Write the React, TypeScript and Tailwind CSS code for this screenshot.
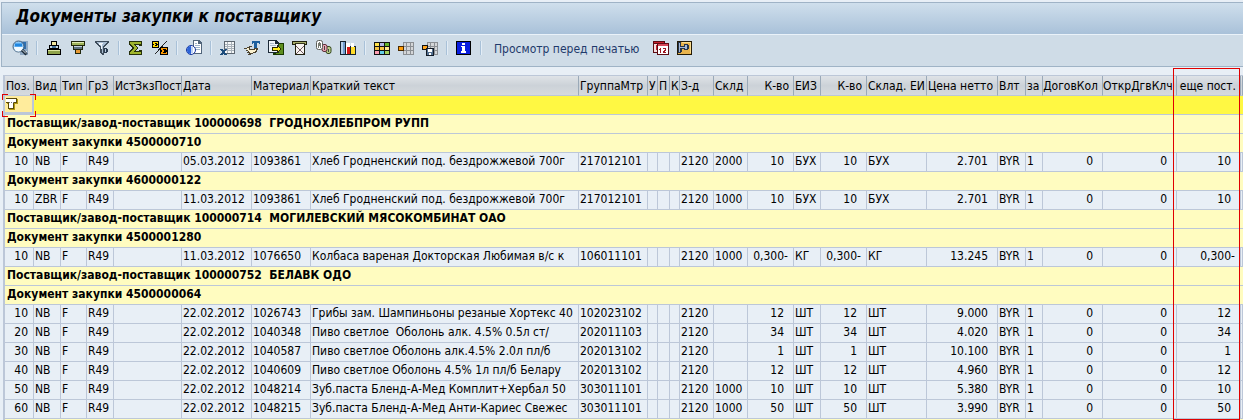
import type { ReactNode } from 'react'

type Column = { title: string; numeric?: boolean; marked?: boolean }

type Row =
  | { kind: 'group'; text: string }
  | { kind: 'item'; cells: string[] }

const columns: Column[] = [
  { title: 'Поз.' },
  { title: 'Вид' },
  { title: 'Тип' },
  { title: 'ГрЗ' },
  { title: 'ИстЗкзПост' },
  { title: 'Дата' },
  { title: 'Материал' },
  { title: 'Краткий текст' },
  { title: 'ГруппаМтр' },
  { title: 'У' },
  { title: 'П' },
  { title: 'К' },
  { title: 'З-д' },
  { title: 'Склд' },
  { title: 'К-во', numeric: true },
  { title: 'ЕИЗ' },
  { title: 'К-во', numeric: true },
  { title: 'Склад. ЕИ' },
  { title: 'Цена нетто', numeric: true },
  { title: 'Влт' },
  { title: 'за' },
  { title: 'ДоговКол', numeric: true },
  { title: 'ОткрДгвКлч', numeric: true },
  { title: 'еще пост.', numeric: true, marked: true },
  { title: 'е' },
]

const group = (text: string): Row => ({ kind: 'group', text })

function item(
  pos: string, type: string, date: string, material: string, text: string,
  matGroup: string, store: string, qty: string, unit: string, price: string,
): Row {
  return {
    kind: 'item',
    cells: [
      pos, type, 'F', 'R49', '', date, material, text, matGroup, '', '', '', '2120', store,
      qty, unit, qty, unit, price, 'BYR', '1', '0', '0', qty, '',
    ],
  }
}

const rows: Row[] = [
  group('Поставщик/завод-поставщик 100000698  ГРОДНОХЛЕБПРОМ РУПП'),
  group('Документ закупки 4500000710'),
  item('10', 'NB', '05.03.2012', '1093861', 'Хлеб Гродненский под. бездрожжевой 700г', '217012101', '2000', '10', 'БУХ', '2.701'),
  group('Документ закупки 4600000122'),
  item('10', 'ZBR', '11.03.2012', '1093861', 'Хлеб Гродненский под. бездрожжевой 700г', '217012101', '1000', '10', 'БУХ', '2.701'),
  group('Поставщик/завод-поставщик 100000714  МОГИЛЕВСКИЙ МЯСОКОМБИНАТ ОАО'),
  group('Документ закупки 4500001280'),
  item('10', 'NB', '11.03.2012', '1076650', 'Колбаса вареная Докторская Любимая в/с к', '106011101', '1000', '0,300-', 'КГ', '13.245'),
  group('Поставщик/завод-поставщик 100000752  БЕЛАВК ОДО'),
  group('Документ закупки 4500000064'),
  item('10', 'NB', '22.02.2012', '1026743', 'Грибы зам. Шампиньоны резаные Хортекс 40', '102023102', '', '12', 'ШТ', '9.000'),
  item('20', 'NB', '22.02.2012', '1040348', 'Пиво светлое  Оболонь алк. 4.5% 0.5л ст/', '202011103', '', '34', 'ШТ', '4.020'),
  item('30', 'NB', '22.02.2012', '1040587', 'Пиво светлое Оболонь алк.4.5% 2.0л пл/б', '202013102', '', '1', 'ШТ', '10.100'),
  item('40', 'NB', '22.02.2012', '1040609', 'Пиво светлое Оболонь 4.5% 1л пл/б Белару', '202013102', '', '12', 'ШТ', '4.960'),
  item('50', 'NB', '22.02.2012', '1048214', 'Зуб.паста Бленд-А-Мед Комплит+Хербал 50', '303011101', '1000', '10', 'ШТ', '5.380'),
  item('60', 'NB', '22.02.2012', '1048215', 'Зуб.паста Бленд-А-Мед Анти-Кариес Свежес', '303011101', '1000', '50', 'ШТ', '3.990'),
]

function Svg({ children }: { children: ReactNode }) {
  return (
    <svg className="w-4 h-4" viewBox="0 0 16 16" shapeRendering="crispEdges" aria-hidden="true">
      {children}
    </svg>
  )
}

const DetailsIcon = () => (
  <Svg>
    <path d="M6 1h10v14H8z" fill="#8fa9c4" />
    <path d="M10 2h4v7h-4z" fill="#2f6fb0" />
    <path d="M12 11h3v3h-3z" fill="#dfe8f0" />
    <g shapeRendering="auto">
      <circle cx="6.500" cy="6.500" r="5.500" fill="#8cc8f8" stroke="#4a6078" />
      <path d="M2 7a4.500 4.500 0 0 0 9 0z" fill="#f2faff" />
      <path d="M3 5h7" stroke="#1f86e0" strokeWidth="3" />
      <path d="M10 10l4.500 4.500" stroke="#1b2a38" strokeWidth="3" />
      <path d="M10.500 10l3.500 3.500" stroke="#dce6ee" strokeWidth="1" />
    </g>
  </Svg>
)

const SortAscIcon = () => (
  <Svg>
    <path d="M5 1h6v4h2v4h2v6H1V9h2V5h2z" fill="#000" />
    <path d="M6 2h4v3H6z" fill="#f4e9a0" />
    <path d="M4 6h8v2H4z" fill="#c9d9e4" />
    <path d="M6 6h4v2H6z" fill="#4a78a0" />
    <path d="M2 10h12v4H2z" fill="#8fa34a" />
    <path d="M2 10h12v1H2z" fill="#dbe5a0" />
  </Svg>
)

const SortDescIcon = () => (
  <Svg>
    <path d="M1 1h14v5h-2v4h-2v4H5v-4H3V6H1z" fill="#20260c" />
    <path d="M2 2h12v3H2z" fill="#9fb45a" />
    <path d="M2 2h12v1H2z" fill="#e0eab0" />
    <path d="M4 6h8v3H4z" fill="#5f7280" />
    <path d="M4 6h8v1H4z" fill="#c4d3df" />
    <path d="M6 10h4v3H6z" fill="#e89a35" />
  </Svg>
)

const FilterIcon = () => (
  <Svg>
    <path d="M1 1h14v2h-1v1h-1v1h-1v1h-1v1h-1v8H8v-1H7v-1H6V7H5V6H4V5H3V4H2V3H1z" fill="#3f4d5c" />
    <path d="M3 2h10v1h-1v1h-1v1h-1v1H9v7H8V8H7V6H6V5H5V4H4V3H3z" fill="#a9bdd2" />
    <path d="M5 3h4v1H8v5H7V5H5z" fill="#eef4fa" />
    <path d="M10 8h3v1h1v3h-1v1h-3z" fill="#2b3c50" />
    <path d="M11 9h1v3h-1z" fill="#b9cde0" />
  </Svg>
)

const SumIcon = () => (
  <Svg>
    <path d="M1 1h13v5h-3V5H8v1h1v1h1v2H9v1H8v1h3v-1h3v5H1v-4h1v-1h1V9h1V7H3V6H2V5H1z" fill="#26300a" />
    <path d="M2 2h11v2H6v1h1v1h1v1h1v2H8v1H7v1H6v1h7v2H2v-2h1v-1h1v-1h1V9h1V7H5V6H4V5H3V4H2z" fill="#9fb52c" />
  </Svg>
)

const SubtotalIcon = () => (
  <Svg>
    <path d="M15 1L3 14" stroke="#222" strokeWidth="1" fill="none" />
    <path d="M0 1h7v7H0z" fill="#000" />
    <path d="M1 2h5v2H5V3H3v1h1v1H3v1h2V5h1v2H1V5h1V4H1z" fill="#ffd800" />
    <path d="M8 7h8v8H8z" fill="#000" />
    <path d="M9 8h6v2h-1V9h-3v1h1v2h-1v1h3v-1h1v2H9v-2h1v-2H9z" fill="#ff9a00" />
  </Svg>
)

const PrintPreviewIcon = () => (
  <Svg>
    <path d="M7 0h6l3 3v11H7z" fill="#51657b" />
    <path d="M8 1h4v3h3v9H8z" fill="#fff" />
    <path d="M9 5h5v1H9zM9 7h5v1H9zM9 9h5v1H9zM9 3h2v1H9z" fill="#9db3c9" />
    <g shapeRendering="auto">
      <circle cx="5" cy="10" r="4.500" fill="#fff" stroke="#12329a" />
      <path d="M5 6a4 4 0 0 0 0 8z" fill="#2c63d8" />
      <path d="M6 7v6" stroke="#7fa5e8" />
    </g>
  </Svg>
)

const SpreadsheetIcon = () => (
  <Svg>
    <path d="M4 1h11v13H4z" fill="#5c6670" />
    <path d="M5 2h9v11H5z" fill="#f5f7f8" />
    <path d="M5 4h9v1H5zM5 6h9v1H5zM5 8h9v1H5zM5 10h9v1H5zM7 2h1v11H7zM11 2h1v11h-1z" fill="#a9b2ba" />
    <path d="M0 9h3v1h2V9h2v1H6v1H5v2h1v1h1v1H4v-1H3v1H0v-1h1v-1h1v-2H1v-1H0z" fill="#1c4c7c" />
  </Svg>
)

const WordIcon = () => (
  <Svg>
    <path d="M8 1h8v3h-1V3h-2v6h-3V3H9v1H8z" fill="#1d5f9e" />
    <path d="M0 8h3V7h2V6h3v1H6v2h4V8h4v2h-1v2h-1v1H9v1H7v1H4v-1h1v-1H3v-1h1v-1H2v-1h1V9H0z" fill="#4d4430" />
    <path d="M3 8h2v2h6V9h1v2h-1v1H9v1H6v-1H5v-1H4v-1H3z" fill="#fbf1cf" />
  </Svg>
)

const ExportIcon = () => (
  <Svg>
    <path d="M5 3h11v12H5z" fill="#183800" />
    <path d="M8 4h7v10H8z" fill="#5e8f1f" />
    <path d="M0 0h8l3 3v10H0z" fill="#1c2a38" />
    <path d="M1 1h6v3h3v8H1z" fill="#eef3f8" />
    <path d="M2 3h4v1H2zM2 5h6v1H2z" fill="#a9b9c9" />
    <path d="M4 7h5V5h1v1h1v1h1v1h1v2h-1v1h-1v1h-1v1H9v-2H4z" fill="#2a2a00" />
    <path d="M5 8h5V7h1v1h1v2h-1v1h-1v-1H5z" fill="#ffec1a" />
  </Svg>
)

const MailIcon = () => (
  <Svg>
    <path d="M0 1h15v4h-2v10H3V5H0z" fill="#20210f" />
    <path d="M1 2h13v2H1z" fill="#a8ad6a" />
    <path d="M3 3h10v1H3z" fill="#34351c" />
    <path d="M4 4h8v10H4z" fill="#f7f3f0" />
    <path d="M4 6h1v1h1v1h1v1h2V8h1V7h1V6h1v1h-1v1h-1v1H9v2h1v1h1v1h1v1h-1v-1h-1v-1H9v-1H7v1H6v1H5v1H4v-1h1v-1h1v-1h1V9H6V8H5V7H4z" fill="#6f5a60" />
  </Svg>
)

const AbcIcon = () => (
  <Svg>
    <g shapeRendering="auto">
      <rect x="10" y="6.500" width="5" height="7" rx="2" fill="#b9d08a" stroke="#33441b" />
      <rect x="6" y="4.500" width="5" height="7" rx="2" fill="#f0a8b4" stroke="#5a2a34" />
      <rect x="0.500" y="0.500" width="6" height="9" rx="2" fill="#fff" stroke="#5c5e58" />
    </g>
    <path d="M3 2h1v1h1v5H4V6H3v2H2V3h1z" fill="#777a70" />
    <path d="M8 6h1v4H8zM12 9h1v3h-1z" fill="#444" />
  </Svg>
)

const ChartIcon = () => (
  <Svg>
    <path d="M0 1h6v14H0zM5 7h5v8H5zM10 6h6v9h-6z" fill="#16222e" />
    <path d="M1 2h4v12H1z" fill="#6f9bcd" />
    <path d="M1 2h2v12H1z" fill="#b5cfea" />
    <path d="M6 3h4v11H6z" fill="#fff" />
    <path d="M7 7h3v7H7z" fill="#d81818" />
    <path d="M11 3h3v4h-3z" fill="#fff" />
    <path d="M11 7h4v7h-4z" fill="#ffdc2a" />
  </Svg>
)

const LayoutIcon = () => (
  <Svg>
    <path d="M0 2h16v13H0z" fill="#111" />
    <path d="M1 3h4v3H1z" fill="#ffe34a" />
    <path d="M6 3h4v3H6z" fill="#b4b8e8" />
    <path d="M11 3h4v3h-4z" fill="#63b52b" />
    <path d="M1 7h4v3H1zM6 7h4v3H6z" fill="#f5c545" />
    <path d="M11 7h4v3h-4z" fill="#ffe98c" />
    <path d="M1 11h4v3H1z" fill="#ff9fb4" />
    <path d="M6 11h4v3H6z" fill="#63cde8" />
    <path d="M11 11h4v3h-4z" fill="#a4d15a" />
  </Svg>
)

const GreyGrid = () => (
  <>
    <path d="M5 2h11v13H5z" fill="#8b8f93" />
    <path d="M6 3h2v3H6zM9 3h3v3H9zM13 3h2v3h-2zM6 7h2v3H6zM9 7h3v3H9zM13 7h2v3h-2zM6 11h2v3H6zM9 11h3v3H9zM13 11h2v3h-2z" fill="#d4d6d8" />
  </>
)

const ChooseLayoutIcon = () => (
  <Svg>
    <GreyGrid />
    <path d="M0 6h6v5H0z" fill="#4a2a00" />
    <path d="M1 7h4v3H1z" fill="#ff9d0a" />
  </Svg>
)

const SaveLayoutIcon = () => (
  <Svg>
    <GreyGrid />
    <path d="M0 5h6v5H0z" fill="#111" />
    <path d="M1 6h4v3H1z" fill="#ffa51e" />
    <path d="M4 8h8v8H4z" fill="#111a26" />
    <path d="M5 9h6v6H5z" fill="#54708f" />
    <path d="M6 9h4v3H6zM7 13h2v2H7z" fill="#fff" />
  </Svg>
)

const InfoIcon = () => (
  <Svg>
    <path d="M0 1h15v14H0z" fill="#000" />
    <path d="M1 2h13v12H1z" fill="#0a1ee0" />
    <path d="M6 3h3v2H6zM5 6h4v5h1v2H5v-2h1V7H5z" fill="#fff" />
  </Svg>
)

const CalendarIcon = () => (
  <Svg>
    <path d="M0 1h12v12H0z" fill="#5d0b12" />
    <path d="M1 4h5v8H1z" fill="#f4dfe0" />
    <path d="M1 2h10v1H1zM3 5h1v5H3z" fill="#c71f2b" />
    <path d="M4 3h12v12H4z" fill="#5d0b12" />
    <path d="M5 4h10v2H5z" fill="#d8485a" />
    <path d="M5 6h10v8H5z" fill="#fff" />
    <path d="M7 8h1v5H7zM6 9h1v1H6zM10 8h3v3h-1v1h1v1h-3v-2h1v-1h1V9h-2z" fill="#a01722" />
  </Svg>
)

const ToolIcon = () => (
  <Svg>
    <path d="M0 1h15v14H0z" fill="#241a05" />
    <path d="M1 2h13v12H1z" fill="#e9b44c" />
    <path d="M5 2h9v1H5zM13 3h1v10h-1z" fill="#f9dc92" />
    <path d="M1 2h3v4h3V4h4v1h1v4h-1v1H7V9H5v3H4v1H1z" fill="#26344a" />
    <path d="M2 3h1v9H2zM3 7h5v1H3zM8 5h2v4H8z" fill="#a5b8d6" />
  </Svg>
)

const toolGroups = [
  [{ label: 'Подробно', Icon: DetailsIcon }],
  [
    { label: 'Сортировать по возрастанию', Icon: SortAscIcon },
    { label: 'Сортировать по убыванию', Icon: SortDescIcon },
    { label: 'Установить фильтр', Icon: FilterIcon },
  ],
  [
    { label: 'Итоги', Icon: SumIcon },
    { label: 'Промежуточные итоги', Icon: SubtotalIcon },
  ],
  [{ label: 'Предварительный просмотр', Icon: PrintPreviewIcon }],
  [
    { label: 'Электронная таблица', Icon: SpreadsheetIcon },
    { label: 'Текстовый редактор', Icon: WordIcon },
    { label: 'Локальный файл', Icon: ExportIcon },
    { label: 'Отправить', Icon: MailIcon },
    { label: 'ABC-анализ', Icon: AbcIcon },
    { label: 'Графика', Icon: ChartIcon },
  ],
  [
    { label: 'Изменить формат', Icon: LayoutIcon },
    { label: 'Выбрать формат', Icon: ChooseLayoutIcon },
    { label: 'Сохранить формат', Icon: SaveLayoutIcon },
  ],
  [{ label: 'Информация', Icon: InfoIcon }],
]

const extraTools = [
  { label: 'График поставок', Icon: CalendarIcon },
  { label: 'История заказа', Icon: ToolIcon },
]

function ToolButton({ label, Icon }: { label: string; Icon: () => ReactNode }) {
  return (
    <button type="button" title={label} aria-label={label} className="w-6 h-6 flex shrink-0 items-center justify-center">
      <Icon />
    </button>
  )
}

function Toolbar() {
  return (
    <div className="flex items-center h-8 pl-1.5 pb-[5px] bg-[#cfdce7] border-t border-[#eaf2f9]">
      {toolGroups.map((tools, i) => (
        <div key={i} className="flex items-center">
          {tools.map((tool) => (
            <ToolButton key={tool.label} {...tool} />
          ))}
          <span className="w-0.5 h-3.5 mx-1 bg-[#a9c1d8] border-r border-[#e3edf6]" />
        </div>
      ))}
      <button type="button" className="pl-2 pr-2.5 pt-0.5 text-[12px] text-[#1f3a6b] whitespace-nowrap">
        Просмотр перед печатью
      </button>
      {extraTools.map((tool) => (
        <ToolButton key={tool.label} {...tool} />
      ))}
    </div>
  )
}

// Numbers keep room on the right for a trailing minus sign
function cellAlign(column: Column, value: string) {
  if (!column.numeric) return 'pl-px'
  return value.endsWith('-') ? 'text-right pr-[5px]' : 'text-right pr-[9px]'
}

function Columns() {
  return (
    <colgroup>
      <col className="w-[29px]" />
      <col className="w-[27px]" />
      <col className="w-[26px]" />
      <col className="w-[27px]" />
      <col className="w-[68px]" />
      <col className="w-[70px]" />
      <col className="w-[59px]" />
      <col className="w-[268px]" />
      <col className="w-[69px]" />
      <col className="w-[10px]" />
      <col className="w-[12px]" />
      <col className="w-[10px]" />
      <col className="w-[34px]" />
      <col className="w-[34px]" />
      <col className="w-[46px]" />
      <col className="w-[27px]" />
      <col className="w-[46px]" />
      <col className="w-[60px]" />
      <col className="w-[71px]" />
      <col className="w-[28px]" />
      <col className="w-[17px]" />
      <col className="w-[60px]" />
      <col className="w-[74px]" />
      <col className="w-[64px]" />
      <col />
    </colgroup>
  )
}

function FilterRow() {
  return (
    <tr className="h-[19px] bg-[#fff843]">
      <td className="p-0 border-b border-[#bcc7d8]">
        <div className="relative h-[18px] pl-px flex items-center bg-[#ffec9c] border-r-2 border-b-2 border-[#bcc7d8]">
          <svg className="w-3 h-3" viewBox="0 0 12 12" shapeRendering="crispEdges" aria-hidden="true">
            <path d="M1 1h11v5H9v6H3V6H1z" fill="#b39a10" />
            <path d="M0 0h11v5H8v6H2V5H0z" fill="#5a4a08" />
            <path d="M0 1h10v3H7v6H3V4H0z" fill="#fff" />
            <path d="M3 4h1v1H3zM5 4h1v1H5zM7 4h1v1H7z" fill="#777" />
          </svg>
          <span className="absolute -left-[3px] -top-0.5 w-1.5 h-1.5 border-l border-t border-[#e00000]" />
          <span className="absolute -right-1 -top-0.5 w-1.5 h-1.5 border-r border-t border-[#e00000]" />
          <span className="absolute -left-[3px] -bottom-[5px] w-1.5 h-1.5 border-l border-b border-[#e00000]" />
          <span className="absolute -right-1 -bottom-[5px] w-1.5 h-1.5 border-r border-b border-[#e00000]" />
        </div>
      </td>
      <td colSpan={columns.length - 1} className="p-0 border-b border-[#bcc7d8]" />
    </tr>
  )
}

function OrdersTable() {
  return (
    <table className="w-full table-fixed border-separate border-spacing-0 text-[12px] leading-4 text-black whitespace-pre">
      <Columns />
      <thead>
        <tr className="h-5">
          {columns.map((column, i) => (
            <th
              key={i}
              scope="col"
              className={`relative p-0 font-normal bg-linear-to-b from-[#dfe3e7] via-[#ccd2d8] to-[#d6dade] border-r border-b border-r-[#9aa9b8] border-b-[#bcc7d8] ${
                column.numeric ? 'text-right pr-1' : 'text-left pl-px'
              }`}
            >
              <span className={column.marked ? '' : 'block overflow-hidden text-clip'}>{column.title}</span>
              {column.marked && (
                <span className="absolute z-10 -left-1 -top-2 w-[67px] h-[352px] border border-[#e00000] pointer-events-none" />
              )}
            </th>
          ))}
        </tr>
      </thead>
      <tbody>
        <FilterRow />
        {rows.map((row, i) =>
          row.kind === 'group' ? (
            <tr key={i} className="h-[19px] bg-[#fffcc0]">
              <td colSpan={columns.length} className="p-0 pl-0.5 pb-0.5 font-bold border-b border-[#bcc7d8]">
                {row.text}
              </td>
            </tr>
          ) : (
            <tr key={i} className="h-[19px] bg-[#e8eff6]">
              {row.cells.map((value, c) => (
                <td
                  key={c}
                  className={`p-0 pb-0.5 overflow-hidden text-clip border-r border-b border-[#bcc7d8] ${
                    c === 0 ? 'text-right pr-[5px]' : cellAlign(columns[c], value)
                  }`}
                >
                  {value}
                </td>
              ))}
            </tr>
          ),
        )}
        <tr className="h-[19px] bg-[#fffcc0]">
          <td colSpan={columns.length} />
        </tr>
      </tbody>
    </table>
  )
}

export default function App() {
  return (
    <main className="h-screen overflow-hidden bg-[#e8eff6] pt-0.5 font-['DejaVu_Sans_Condensed','DejaVu_Sans',sans-serif]">
      <header className="ml-px border-l border-t border-b border-[#9fb3c6]">
        <h1 className="h-[31px] pl-3.5 pb-1 flex items-center bg-linear-to-b from-[#cfdfec] to-[#a9c1d9] text-[17px] font-bold italic text-black">
          Документы закупки к поставщику
        </h1>
        <Toolbar />
      </header>
      <section className="mt-2 ml-[3px] border-l-2 border-t border-[#bcc7d8]">
        <OrdersTable />
      </section>
    </main>
  )
}
